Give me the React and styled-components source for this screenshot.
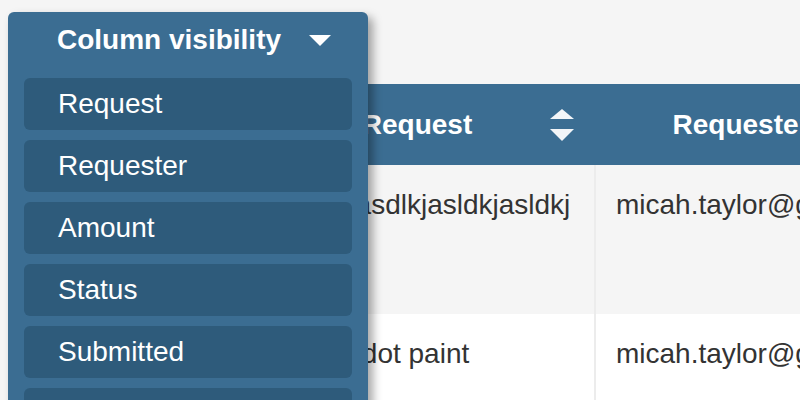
import React from "react";
import styled, { createGlobalStyle } from "styled-components";

const Global = createGlobalStyle`
  html, body { margin: 0; padding: 0; background: #f5f5f5; }
  body { font-family: "Liberation Sans", Arial, Helvetica, sans-serif; overflow: hidden; }
  * { box-sizing: border-box; }
`;

const Page = styled.div`
  position: relative;
  width: 800px;
  height: 400px;
  overflow: hidden;
  background: #f5f5f5;
  padding: 84px 0 0 8px;
`;

const Table = styled.div`
  width: 878px;
`;

const Row = styled.div`
  display: grid;
  grid-template-columns: 254px 334px 290px;
  min-height: ${(p) => p.$minH || 0}px;
  background: ${(p) => (p.$head ? "#3b6d92" : p.$striped ? "#f5f5f5" : "#ffffff")};
  height: ${(p) => (p.$head ? "81px" : "auto")};
  align-items: ${(p) => (p.$head ? "center" : "stretch")};
`;

const HeadCell = styled.div`
  display: flex;
  align-items: center;
  padding: 0 22px;
  font-size: 28px;
  line-height: 40px;
  font-weight: 700;
  color: #ffffff;
`;

const HeadLabel = styled.span`
  flex: 1;
  text-align: center;
  white-space: nowrap;
`;

const Cell = styled.div`
  padding: 20px 20px 20px ${(p) => (p.$divider ? "22px" : "20px")};
  font-size: 28px;
  line-height: 40px;
  color: #333333;
  border-right: ${(p) => (p.$divider ? "2px solid #ececec" : "none")};
  white-space: nowrap;
`;

const Menu = styled.div`
  position: absolute;
  left: 8px;
  top: 12px;
  width: 360px;
  height: 460px;
  background: #3b6d92;
  border-radius: 6px;
  padding: 0 16px 16px;
  box-shadow: 5px 5px 10px rgba(0, 0, 0, 0.35);
  display: flex;
  flex-direction: column;
`;

const MenuHead = styled.div`
  height: 56px;
  display: flex;
  align-items: center;
  gap: 28px;
  padding-left: 33px;
  color: #ffffff;
  font-size: 28px;
  line-height: 40px;
  font-weight: 700;
`;

const MenuList = styled.div`
  margin-top: 10px;
  display: flex;
  flex-direction: column;
  gap: 10px;
`;

const MenuItem = styled.div`
  height: 52px;
  border-radius: 6px;
  background: #2e5b7b;
  color: #ffffff;
  font-size: 28px;
  line-height: 40px;
  display: flex;
  align-items: center;
  padding-left: 34px;
`;

const Caret = () => (
  <svg width="22" height="12" viewBox="0 0 22 12" style={{ marginTop: 2 }}>
    <polygon points="0,0 22,0 11,11" fill="#ffffff" />
  </svg>
);

const SortIcon = () => (
  <svg width="24" height="32" viewBox="0 0 24 32">
    <polygon points="12,0 24,10 0,10" fill="#f2f5f8" />
    <polygon points="0,20 24,20 12,32" fill="#f2f5f8" />
  </svg>
);

const columns = ["Request", "Requester", "Amount", "Status", "Submitted", "Actions"];

const rows = [
  { id: 1, request: "asdlkjasdlkjasldkjasldkj", requester: "micah.taylor@gmail.com", minH: 149 },
  { id: 2, request: "Polka dot paint", requester: "micah.taylor@gmail.com", minH: 100 },
];

export default function App() {
  return (
    <Page>
      <Global />
      <Table>
        <Row $head>
          <HeadCell />
          <HeadCell>
            <HeadLabel>Request</HeadLabel>
            <SortIcon />
          </HeadCell>
          <HeadCell>
            <HeadLabel>Requester</HeadLabel>
          </HeadCell>
        </Row>
        {rows.map((r, i) => (
          <Row key={r.id} $striped={i % 2 === 0} $minH={r.minH}>
            <Cell />
            <Cell $divider>{r.request}</Cell>
            <Cell>{r.requester}</Cell>
          </Row>
        ))}
      </Table>
      <Menu>
        <MenuHead>
          <span>Column visibility</span>
          <Caret />
        </MenuHead>
        <MenuList>
          {columns.map((c) => (
            <MenuItem key={c}>{c}</MenuItem>
          ))}
        </MenuList>
      </Menu>
    </Page>
  );
}
